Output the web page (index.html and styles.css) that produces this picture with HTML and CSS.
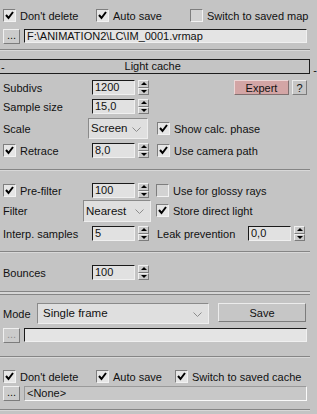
FILE: index.html
```html
<!DOCTYPE html>
<html lang="en">
<head>
    <meta charset="UTF-8">
    <meta name="viewport" content="width=device-width, initial-scale=1.0">
    <title>Light cache</title>
    <link rel="stylesheet" href="styles.css">
</head>
<body>

<div class="panel">

    <!-- map file -->
    <div class="checks">
        <label class="chk c1"><span class="box on"><svg viewBox="0 0 11 11"><polyline points="2,5 4.5,8 9,2"/></svg></span>Don't delete</label>
        <label class="chk c2"><span class="box on"><svg viewBox="0 0 11 11"><polyline points="2,5 4.5,8 9,2"/></svg></span>Auto save</label>
        <label class="chk"><span class="box"></span>Switch to saved map</label>
    </div>
    <div class="file-row">
        <button class="dots">...</button>
        <div class="field">F:\ANIMATION2\LC\IM_0001.vrmap</div>
    </div>
    <div class="sep"></div>

    <!-- rollout title -->
    <div class="title-row">
        <div class="title"><span class="dash left">-</span>Light cache</div>
        <span class="dash">-</span>
    </div>

    <div class="row r-first">
        <span class="lbl">Subdivs</span>
        <div class="spin"><div class="num">1200</div><div class="arrows"><span class="up"></span><span class="down"></span></div></div>
        <button class="btn expert">Expert</button>
        <button class="btn help">?</button>
    </div>
    <div class="row">
        <span class="lbl">Sample size</span>
        <div class="spin"><div class="num">15,0</div><div class="arrows"><span class="up"></span><span class="down"></span></div></div>
    </div>
    <div class="row tall">
        <span class="lbl short">Scale</span>
        <div class="combo scale">Screen<svg class="chev" viewBox="0 0 9 5"><polyline points="0.5,0.5 4.5,4.5 8.5,0.5"/></svg></div>
        <label class="chk right-a"><span class="box on"><svg viewBox="0 0 11 11"><polyline points="2,5 4.5,8 9,2"/></svg></span>Show calc. phase</label>
    </div>
    <div class="row">
        <label class="chk lbl"><span class="box on"><svg viewBox="0 0 11 11"><polyline points="2,5 4.5,8 9,2"/></svg></span>Retrace</label>
        <div class="spin"><div class="num">8,0</div><div class="arrows"><span class="up"></span><span class="down"></span></div></div>
        <label class="chk right-b"><span class="box on"><svg viewBox="0 0 11 11"><polyline points="2,5 4.5,8 9,2"/></svg></span>Use camera path</label>
    </div>
    <div class="sep s2"></div>

    <div class="row r-pre">
        <label class="chk lbl"><span class="box on"><svg viewBox="0 0 11 11"><polyline points="2,5 4.5,8 9,2"/></svg></span>Pre-filter</label>
        <div class="spin"><div class="num">100</div><div class="arrows"><span class="up"></span><span class="down"></span></div></div>
        <label class="chk right-c"><span class="box"></span>Use for glossy rays</label>
    </div>
    <div class="row tall r-filter">
        <span class="lbl filter">Filter</span>
        <div class="combo nearest">Nearest<svg class="chev" viewBox="0 0 9 5"><polyline points="0.5,0.5 4.5,4.5 8.5,0.5"/></svg></div>
        <label class="chk right-d"><span class="box on"><svg viewBox="0 0 11 11"><polyline points="2,5 4.5,8 9,2"/></svg></span>Store direct light</label>
    </div>
    <div class="row r-interp">
        <span class="lbl">Interp. samples</span>
        <div class="spin"><div class="num">5</div><div class="arrows"><span class="up"></span><span class="down"></span></div></div>
        <span class="lbl leak">Leak prevention</span>
        <div class="spin"><div class="num">0,0</div><div class="arrows"><span class="up"></span><span class="down"></span></div></div>
    </div>
    <div class="sep s3"></div>

    <div class="row r-bounce">
        <span class="lbl">Bounces</span>
        <div class="spin"><div class="num">100</div><div class="arrows"><span class="up"></span><span class="down"></span></div></div>
    </div>
    <div class="sep double"></div>

    <!-- mode -->
    <div class="row tall r-mode">
        <span class="lbl mode">Mode</span>
        <div class="combo single">Single frame<svg class="chev" viewBox="0 0 9 5"><polyline points="0.5,0.5 4.5,4.5 8.5,0.5"/></svg></div>
        <button class="btn save">Save</button>
    </div>
    <div class="file-row r-path">
        <button class="dots off">...</button>
        <div class="field"></div>
    </div>
    <div class="sep s4"></div>

    <div class="checks r-cache">
        <label class="chk c1"><span class="box on"><svg viewBox="0 0 11 11"><polyline points="2,5 4.5,8 9,2"/></svg></span>Don't delete</label>
        <label class="chk c2b"><span class="box on"><svg viewBox="0 0 11 11"><polyline points="2,5 4.5,8 9,2"/></svg></span>Auto save</label>
        <label class="chk"><span class="box on"><svg viewBox="0 0 11 11"><polyline points="2,5 4.5,8 9,2"/></svg></span>Switch to saved cache</label>
    </div>
    <div class="file-row r-none">
        <button class="dots">...</button>
        <div class="field flat">&lt;None&gt;</div>
    </div>
    <div class="sep s5"></div>

</div>

</body>
</html>
```

FILE: styles.css
```css
body {
    margin: 0;
    background-color: #c4c4c4;
    font-family: "Liberation Sans", Arial, sans-serif;
    font-size: 11px;
    color: #111;
    overflow: hidden;
}

.panel {
    width: 317px;
    height: 414px;
    padding-top: 9px;
    box-sizing: border-box;
}

/* checkboxes */
.checks {
    display: flex;
    height: 13px;
    padding-left: 3px;
    align-items: center;
}

.chk {
    display: flex;
    align-items: center;
    gap: 4px;
    white-space: nowrap;
}

.c1 { width: 93px; }
.c2 { width: 94px; }
.c2b { width: 79px; }

.box {
    width: 11px;
    height: 11px;
    flex: none;
    border: 1px solid;
    border-color: #7e7e7e #f2f2f2 #f2f2f2 #7e7e7e;
    background-color: #d2d2d2;
    display: flex;
}

.box.on {
    background-color: #e6e6e6;
}

.box svg {
    width: 11px;
    height: 11px;
}

.box polyline {
    fill: none;
    stroke: #000;
    stroke-width: 2;
}

/* file rows */
.file-row {
    display: flex;
    margin-top: 7px;
    padding-left: 3px;
    gap: 4px;
    height: 15px;
}

.dots {
    width: 17px;
    height: 15px;
    padding: 0 0 3px 0;
    font: inherit;
    color: #111;
    background-color: #cbcbcb;
    border: 1px solid;
    border-color: #f0f0f0 #7c7c7c #7c7c7c #f0f0f0;
    line-height: 8px;
}

.dots.off {
    color: #8e8e8e;
}

.field {
    width: 283px;
    height: 14px;
    box-sizing: border-box;
    border: 1px solid;
    border-color: #1a1a1a #f0f0f0 #f0f0f0 #1a1a1a;
    background-color: #e4e4e4;
    padding-left: 2px;
    line-height: 12px;
    white-space: nowrap;
}

.field.flat {
    height: 15px;
    border-color: #9a9a9a #fafafa #fafafa #9a9a9a;
    background-color: #c8c8c8;
    line-height: 13px;
}

/* separators */
.sep {
    width: 310px;
    height: 0;
    border-top: 1px solid #858585;
    border-bottom: 1px solid #d8d8d8;
    margin-top: 5px;
}

.sep.s2 { margin-top: 11px; }
.sep.s3 { margin-top: 10px; }
.sep.s4 { margin-top: 13px; }
.sep.s5 { margin-top: 8px; }

.sep.double {
    height: 2px;
    margin-top: 11px;
    border-bottom-color: #858585;
    background-color: #d6d6d6;
}

/* rollout title */
.title-row {
    display: flex;
    align-items: center;
    margin-top: 8px;
}

.title {
    position: relative;
    width: 316px;
    margin-left: -5px;
    height: 15px;
    box-sizing: border-box;
    border: 1px solid #1c1c1c;
    text-align: center;
    line-height: 13px;
}

.dash {
    margin-left: 3px;
    line-height: 8px;
    padding-top: 6px;
}

.dash.left {
    position: absolute;
    left: 5px;
    top: 1px;
    margin: 0;
    padding: 0;
    line-height: 13px;
}

/* parameter rows */
.row {
    display: flex;
    align-items: center;
    height: 15px;
    margin-top: 4px;
    padding-left: 3px;
}

.row.tall {
    height: 21px;
}

.r-first { margin-top: 6px; }
.r-pre { margin-top: 12px; }
.r-filter { margin-top: 2px; height: 22px; }
.r-interp { margin-top: 5px; }
.r-bounce { margin-top: 12px; }
.r-mode { margin-top: 8px; }
.r-path { margin-top: 4px; }
.r-cache { margin-top: 12px; }
.r-none { margin-top: 3px; }

.lbl {
    width: 89px;
    flex: none;
    white-space: nowrap;
}

.lbl.short { width: 85px; }
.lbl.filter { width: 80px; }
.lbl.mode { width: 34px; }
.lbl.leak { width: 91px; margin-left: 8px; }

/* spinners */
.spin {
    display: flex;
    gap: 3px;
}

.num {
    width: 43px;
    height: 15px;
    box-sizing: border-box;
    border: 1px solid;
    border-color: #1a1a1a #f0f0f0 #f0f0f0 #1a1a1a;
    background-color: #e1e1e1;
    padding-left: 2px;
    line-height: 13px;
}

.arrows {
    width: 11px;
    height: 15px;
    display: flex;
    flex-direction: column;
}

.arrows span {
    flex: 1;
    box-sizing: border-box;
    border: 1px solid;
    border-color: #f0f0f0 #7c7c7c #7c7c7c #f0f0f0;
    background-color: #cbcbcb;
    display: flex;
    align-items: center;
    justify-content: center;
}

.arrows .up::after {
    content: "";
    border-left: 3px solid transparent;
    border-right: 3px solid transparent;
    border-bottom: 3px solid #000;
}

.arrows .down::after {
    content: "";
    border-left: 3px solid transparent;
    border-right: 3px solid transparent;
    border-top: 3px solid #000;
}

/* dropdowns */
.combo {
    position: relative;
    height: 21px;
    box-sizing: border-box;
    border: 1px solid;
    border-color: #8a8a8a #eeeeee #eeeeee #8a8a8a;
    background-color: #dfdfdf;
    padding-left: 2px;
    line-height: 19px;
    font-size: 11.5px;
}

.combo.scale { width: 60px; }
.combo.nearest { width: 68px; height: 22px; line-height: 20px; }
.combo.single { width: 172px; padding-left: 5px; }

.chev {
    position: absolute;
    right: 6px;
    top: 8px;
    width: 9px;
    height: 5px;
}

.chev polyline {
    fill: none;
    stroke: #8c8c8c;
    stroke-width: 1;
}

.right-a { margin-left: 9px; }
.right-b { margin-left: 8px; }
.right-c { margin-left: 7px; }
.right-d { margin-left: 5px; }

/* buttons */
.btn {
    height: 15px;
    padding: 0;
    font: inherit;
    color: #111;
    background-color: #c6c6c6;
    border: 1px solid;
    border-color: #ececec #7c7c7c #7c7c7c #ececec;
}

.expert {
    width: 55px;
    margin-left: 85px;
    background-color: #d3a5a5;
    border-color: #ecd6d6 #7f6f6f #7f6f6f #ecd6d6;
}

.help {
    width: 15px;
    margin-left: 3px;
}

.save {
    width: 88px;
    height: 19px;
    margin-left: 9px;
    align-self: flex-start;
}
```
